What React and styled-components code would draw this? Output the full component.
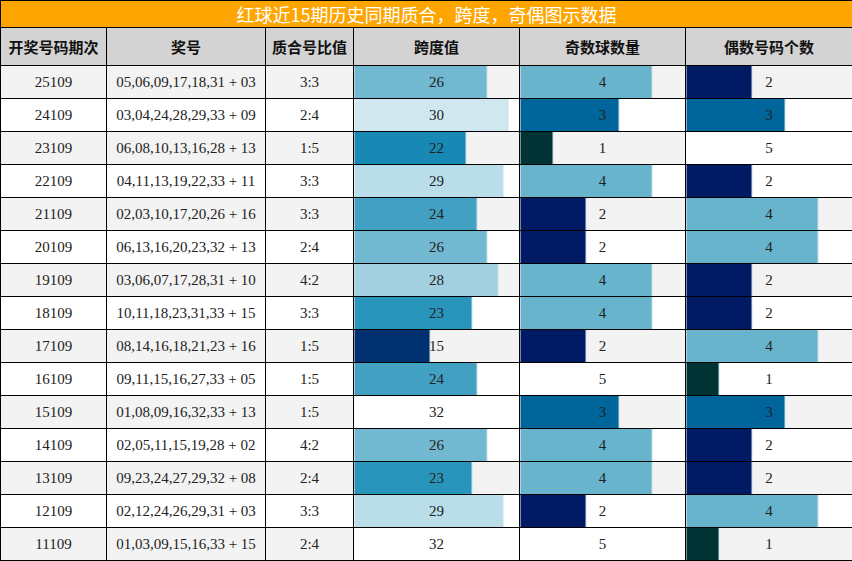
import React from "react";
import styled, { createGlobalStyle } from "styled-components";

const Global = createGlobalStyle`
  html, body { margin: 0; padding: 0; background: #fff; }
  body { font-family: "Liberation Serif", "Noto Sans CJK SC", serif; }
`;

const Table = styled.table`
  width: 852px;
  border-collapse: collapse;
  table-layout: fixed;
`;

const Col = styled.col`
  width: ${(p) => p.$w}px;
`;

const TitleCell = styled.td`
  height: 26px;
  padding: 0;
  background: #ffa500;
  color: #fff;
  border: 1px solid #000;
  text-align: center;
  font-family: "Noto Sans CJK SC", "Noto Sans", sans-serif;
  font-size: 18px;
  line-height: 26px;
`;

const HeadCell = styled.th`
  height: 37px;
  padding: 0;
  background: #d3d3d3;
  border: 1px solid #000;
  color: #111;
  font-family: "Noto Sans CJK SC", "Noto Sans", sans-serif;
  font-weight: bold;
  font-size: 15px;
  text-align: center;
`;

const Cell = styled.td`
  height: 32px;
  padding: 0;
  border: 1px solid #000;
  background: ${(p) => (p.$alt ? "#f3f3f3" : "#ffffff")};
  color: #222;
  font-family: "Liberation Serif", "Noto Sans CJK SC", serif;
  font-size: 15px;
  text-align: center;
  white-space: nowrap;
`;

const spanColors = {
  15: "#003070",
  22: "#1789b4",
  23: "#2a95bb",
  24: "#42a1c3",
  26: "#71b8d0",
  28: "#a2d0e1",
  29: "#b9dde9",
  30: "#d0e7f0",
  32: "#ffffff",
};
const countColors = {
  1: "#003333",
  2: "#001a63",
  3: "#00659a",
  4: "#67b4cc",
  5: "#ffffff",
};

const columns = [106, 159, 88, 166, 166, 167];
const headers = ["开奖号码期次", "奖号", "质合号比值", "跨度值", "奇数球数量", "偶数号码个数"];

const rows = [
  ["25109", "05,06,09,17,18,31 + 03", "3:3", 26, 4, 2],
  ["24109", "03,04,24,28,29,33 + 09", "2:4", 30, 3, 3],
  ["23109", "06,08,10,13,16,28 + 13", "1:5", 22, 1, 5],
  ["22109", "04,11,13,19,22,33 + 11", "3:3", 29, 4, 2],
  ["21109", "02,03,10,17,20,26 + 16", "3:3", 24, 2, 4],
  ["20109", "06,13,16,20,23,32 + 13", "2:4", 26, 2, 4],
  ["19109", "03,06,07,17,28,31 + 10", "4:2", 28, 4, 2],
  ["18109", "10,11,18,23,31,33 + 15", "3:3", 23, 4, 2],
  ["17109", "08,14,16,18,21,23 + 16", "1:5", 15, 2, 4],
  ["16109", "09,11,15,16,27,33 + 05", "1:5", 24, 5, 1],
  ["15109", "01,08,09,16,32,33 + 13", "1:5", 32, 3, 3],
  ["14109", "02,05,11,15,19,28 + 02", "4:2", 26, 4, 2],
  ["13109", "09,23,24,27,29,32 + 08", "2:4", 23, 4, 2],
  ["12109", "02,12,24,26,29,31 + 03", "3:3", 29, 2, 4],
  ["11109", "01,03,09,15,16,33 + 15", "2:4", 32, 5, 1],
];

function barStyle(width, color) {
  const w = Math.round(width);
  if (color === "#ffffff") {
    return { background: "#ffffff" };
  }
  return {
    backgroundImage: `linear-gradient(to right, ${color} 0, ${color} ${w - 1}px, #c6dfea ${w - 1}px, #c6dfea ${w}px, transparent ${w}px)`,
  };
}

const spanWidth = (v) => 5.2 * v - 2;
const countWidth = (v) => 33 * v;

const BarCell = ({ value, width, colors, alt }) => (
  <Cell $alt={alt} style={barStyle(width(value), colors[value])}>
    {value}
  </Cell>
);

export default function App() {
  return (
    <>
      <Global />
      <Table>
        <colgroup>
          {columns.map((w, i) => (
            <Col key={i} $w={w} />
          ))}
        </colgroup>
        <tbody>
          <tr>
            <TitleCell colSpan={6}>红球近15期历史同期质合，跨度，奇偶图示数据</TitleCell>
          </tr>
          <tr>
            {headers.map((h) => (
              <HeadCell key={h}>{h}</HeadCell>
            ))}
          </tr>
          {rows.map((r, i) => {
            const alt = i % 2 === 0;
            return (
              <tr key={r[0]}>
                <Cell $alt={alt}>{r[0]}</Cell>
                <Cell $alt={alt}>{r[1]}</Cell>
                <Cell $alt={alt}>{r[2]}</Cell>
                <BarCell value={r[3]} width={spanWidth} colors={spanColors} alt={alt} />
                <BarCell value={r[4]} width={countWidth} colors={countColors} alt={alt} />
                <BarCell value={r[5]} width={countWidth} colors={countColors} alt={alt} />
              </tr>
            );
          })}
        </tbody>
      </Table>
    </>
  );
}
